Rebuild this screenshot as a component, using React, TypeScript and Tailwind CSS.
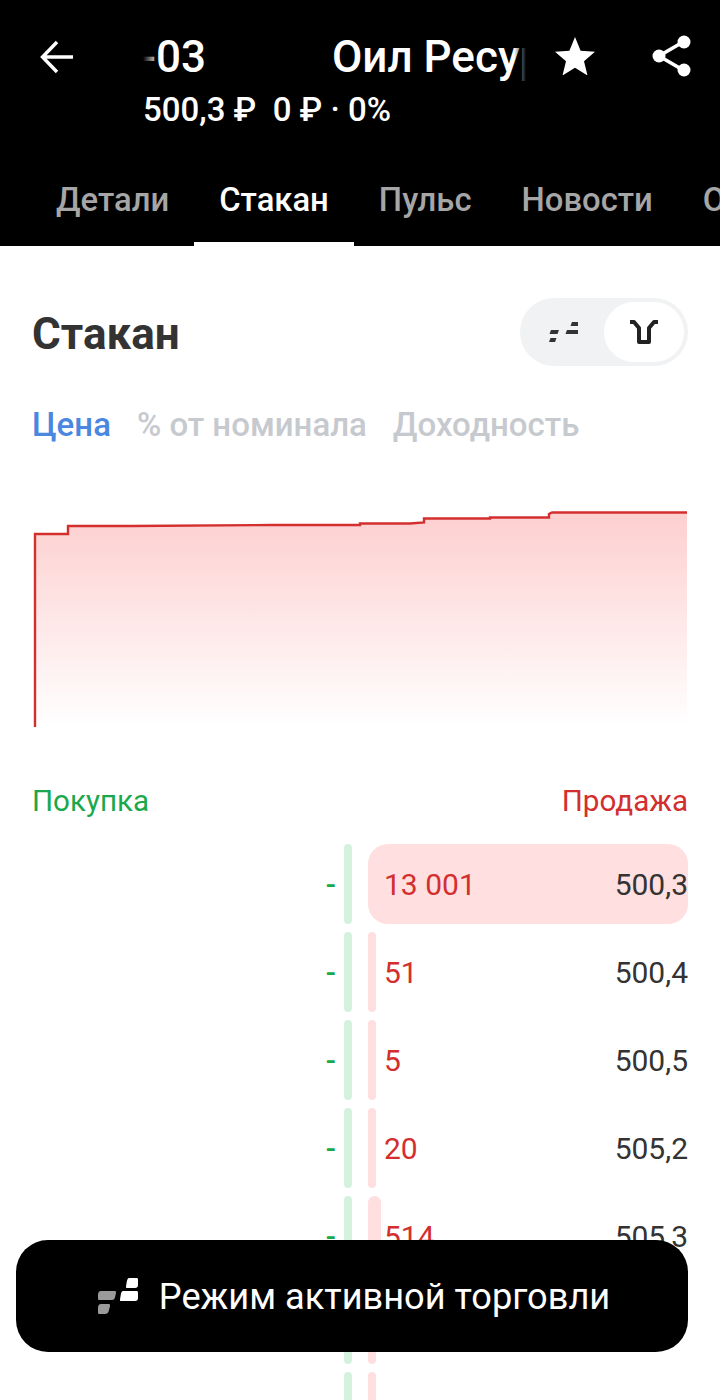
import React from "react";

const tabs = ["Детали", "Стакан", "Пульс", "Новости", "О"];

const asks = [
  { volume: "13 001", price: "500,3", bid: "-", bar: "w-full rounded-[20px]" },
  { volume: "51", price: "500,4", bid: "-", bar: "w-2 rounded-full" },
  { volume: "5", price: "500,5", bid: "-", bar: "w-2 rounded-full" },
  { volume: "20", price: "505,2", bid: "-", bar: "w-2 rounded-full" },
  { volume: "514", price: "505,3", bid: "-", bar: "w-[13px] rounded-full" },
  { volume: "", price: "", bid: "", bar: "w-2 rounded-full" },
  { volume: "", price: "", bid: "", bar: "w-2 rounded-full" },
];

const BackIcon = () => (
  <svg width="34" height="34" viewBox="0 0 34 34" fill="none" stroke="white" strokeWidth="3.4">
    <path d="M33 17H3M17 2L2.5 17L17 32" />
  </svg>
);

const StarIcon = () => (
  <svg width="40" height="38" viewBox="0 0 40 38" fill="white">
    <path d="M20 0l5.6 13.8 14.4 1-11 9.500 3.500 14.200L20 30.700 7.500 38.500 11 24.300 0 14.800l14.400-1z" />
  </svg>
);

const ShareIcon = () => (
  <svg width="40" height="42" viewBox="0 0 40 42" fill="white" stroke="white">
    <path d="M31 7L7 21l24 14" fill="none" strokeWidth="3.600" />
    <circle cx="32" cy="7" r="6.500" stroke="none" />
    <circle cx="7" cy="21" r="6.500" stroke="none" />
    <circle cx="32" cy="35" r="6.500" stroke="none" />
  </svg>
);

const DepthIcon = () => (
  <svg width="30" height="22" viewBox="0 0 30 22" fill="#333">
    <path d="M2 9h8l-1.500 4H0.500zM1.500 17h6l-1.500 4H0zM18 9h11v4H16.500zM23 1h6v4h-7.500z" />
  </svg>
);

const ChartIcon = () => (
  <svg width="30" height="26" viewBox="0 0 30 26" fill="none" stroke="#222" strokeWidth="4" strokeLinejoin="round">
    <path d="M1 3h4l5 6v14h10V9l5-6h4" />
  </svg>
);

const TradeLogo = () => (
  <svg width="40" height="36" viewBox="0 0 40 36" className="shrink-0">
    <path d="M3 13H17q1.500 0 1 2l-1 4.500q-.6 2.500-3 2.500H1q-1 0-1-1.500V17q0-4 3-4z" fill="#9a9a9a" />
    <path d="M3 26H11q1.500 0 1 2l-1 4q-.6 4-4 4H1q-1 0-1-1.500V30q0-4 3-4z" fill="#9a9a9a" />
    <path d="M25 13H39q1 0 1 1.500V20q0 3-3 3H23q-1.500 0-1-1.500l.8-5q.5-3.500 2.200-3.500z" fill="white" />
    <path d="M31 0H39q1 0 1 1.500V7q0 3-3 3H29q-1.500 0-1-1.500l.8-5Q29.500 0 31 0z" fill="white" />
  </svg>
);

const DepthChart = () => (
  <svg width="654" height="216" viewBox="0 0 654 216" className="ml-px block">
    <defs>
      <linearGradient id="askFill" x1="0" y1="0" x2="0" y2="1">
        <stop offset="0" stopColor="#fdcfcf" />
        <stop offset="1" stopColor="#ffffff" />
      </linearGradient>
    </defs>
    <path
      d="M2 216V23H35V15H98L240 14H327V12.500H377L391 11.500V7.500H457V6.500H516V3L519 1.500H654V216Z"
      fill="url(#askFill)"
    />
    <path
      d="M2 216V23H35V15H98L240 14H327V12.500H377L391 11.500V7.500H457V6.500H516V3L519 1.500H654"
      fill="none"
      stroke="#d32f2f"
      strokeWidth="2.400"
    />
  </svg>
);

const App = () => {
  return (
    <div className="relative h-[1400px] w-[720px] overflow-hidden bg-white font-[Roboto,sans-serif]">
      <header className="h-[246px] bg-black text-white">
        <div className="flex pl-10 pr-7 pt-[28px]">
          <div className="w-[105px] pt-[12px]">
            <BackIcon />
          </div>
          <div className="w-[383px]">
            <div className="relative h-[56px] overflow-hidden">
              <div className="-ml-[2px] flex whitespace-nowrap text-[44px] font-medium leading-[58px]">
                <span className="w-[191px] shrink-0">-03</span>
                <span>Оил Ресурс</span>
              </div>
              <div className="absolute inset-y-0 left-0 w-[16px] bg-gradient-to-r from-black to-transparent" />
              <div className="absolute inset-y-0 right-0 w-[12px] bg-gradient-to-l from-black to-transparent" />
            </div>
            <div className="mt-[4px] whitespace-pre text-[33px] font-medium leading-[44px]">
              500,3 ₽  0 ₽ · 0%
            </div>
          </div>
          <div className="ml-[29px] pt-[9px]">
            <StarIcon />
          </div>
          <div className="ml-[57px] pt-[7px]">
            <ShareIcon />
          </div>
        </div>
        <nav className="mt-[40px] flex whitespace-nowrap pl-[31px] text-[32.8px] font-medium leading-[48px]">
          {tabs.map((tab) => (
            <div
              key={tab}
              className={
                tab === "Стакан"
                  ? "h-[74px] shrink-0 border-b-4 border-white px-[25px] pt-[4px] text-white"
                  : "h-[74px] shrink-0 px-[25px] pt-[4px] text-[#a6a6a6]"
              }
            >
              {tab}
            </div>
          ))}
        </nav>
      </header>

      <main className="px-8">
        <div className="flex items-center justify-between pt-[52px]">
          <h1 className="h-[68px] text-[44px] font-bold leading-[72px] text-[#333333]">Стакан</h1>
          <div className="flex h-[68px] w-[168px] items-center rounded-full bg-[#f0f2f3] p-1">
            <div className="flex w-[80px] justify-center">
              <DepthIcon />
            </div>
            <div className="flex h-[60px] w-[80px] items-center justify-center rounded-full bg-white">
              <ChartIcon />
            </div>
          </div>
        </div>

        <div className="mt-[37px] flex gap-[26px] text-[33px] font-medium leading-[44px] text-[#c6c9cd]">
          <span className="text-[#4a87e0]">Цена</span>
          <span>% от номинала</span>
          <span>Доходность</span>
        </div>

        <div className="mt-[64px]">
          <DepthChart />
        </div>

        <div className="mt-[54px] flex justify-between text-[29.6px] leading-[40px]">
          <span className="text-[#1ba84c]">Покупка</span>
          <span className="text-[#d32f2f]">Продажа</span>
        </div>

        <div className="mt-[23px] flex flex-col gap-2">
          {asks.map((row, i) => (
            <div key={i} className="flex h-20 shrink-0 text-[30px]">
              <div className="flex w-[312px] items-center justify-end pr-2 font-medium text-[#1ba84c]">{row.bid}</div>
              <div className="w-2 rounded-full bg-[#d5f2df]" />
              <div className="relative ml-4 flex flex-1 items-center justify-between pl-4">
                <div className={`absolute inset-y-0 left-0 bg-[#ffdfdf] ${row.bar}`} />
                <span className="relative text-[#d32f2f]">{row.volume}</span>
                <span className="relative text-[#333333]">{row.price}</span>
              </div>
            </div>
          ))}
        </div>
      </main>

      <button className="absolute left-4 top-[1240px] flex h-[112px] w-[672px] items-center justify-center gap-[21px] rounded-[32px] bg-black pl-[4px] text-[36.2px] text-white">
        <TradeLogo />
        <span className="mt-[3px]">Режим активной торговли</span>
      </button>
    </div>
  );
};

export default App;
